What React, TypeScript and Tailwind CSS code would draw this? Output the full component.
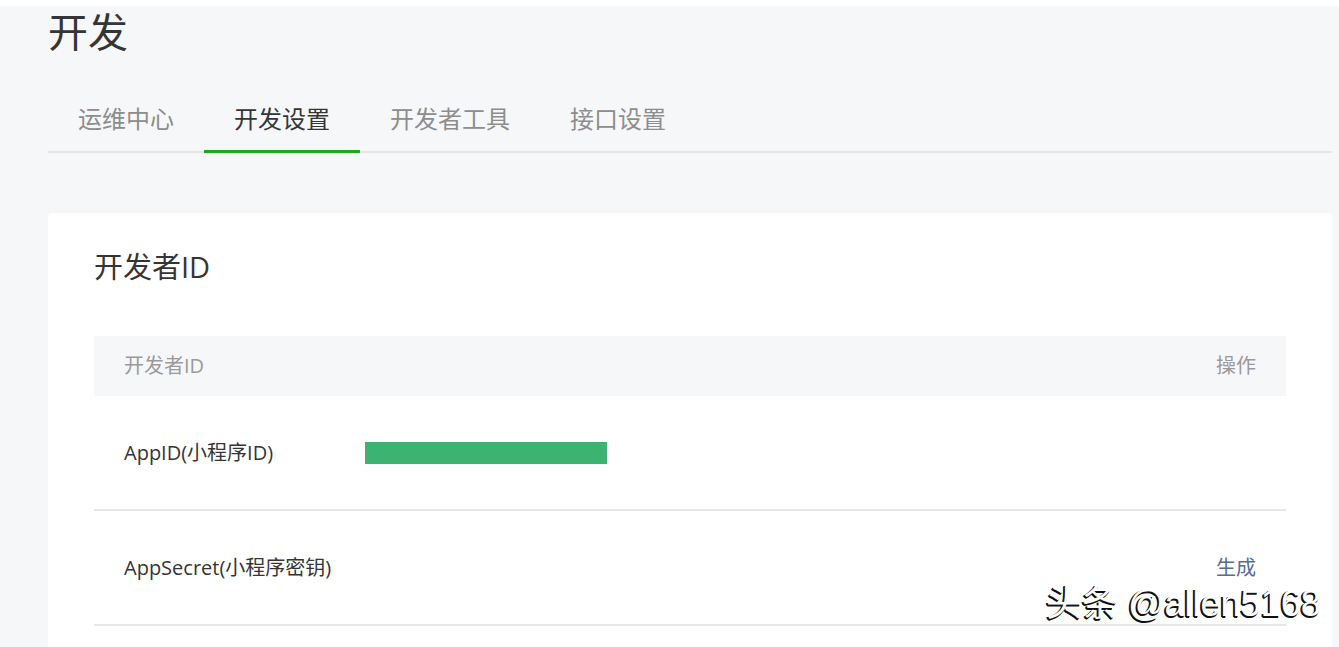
import React, { useState } from 'react';

const tabs = ['运维中心', '开发设置', '开发者工具', '接口设置'];

type Row = { label: string; value?: boolean; action?: string };

const rows: Row[] = [
  { label: 'AppID(小程序ID)', value: true },
  { label: 'AppSecret(小程序密钥)', action: '生成' },
];

export default function App() {
  const [active, setActive] = useState(1);

  return (
    <div className="relative w-[1339px] h-[647px] overflow-hidden bg-white font-[Open_Sans,Noto_Sans_CJK_SC,sans-serif]">
      <div className="mt-[6px] h-[641px] bg-[#f6f7f9] pl-[48px] pr-[7px]">
        {/* Page title */}
        <h1 className="text-[40px] leading-[52px] text-[#353535]">开发</h1>

        {/* Tabs */}
        <div className="mt-[44px] flex border-b-2 border-[#e5e6e8]">
          {tabs.map((tab, idx) => (
            <button
              key={tab}
              onClick={() => setActive(idx)}
              className={`
                -mb-[2px] px-[30px] pb-[14px] text-[24px] leading-[34px] border-b-[3px]
                ${active === idx ? 'border-[#1aad19] text-[#353535]' : 'border-transparent text-[#8d8d8d]'}
              `}
            >
              {tab}
            </button>
          ))}
        </div>

        {/* Card */}
        <div className="mt-[60px] rounded-[4px] bg-white px-[46px] pt-[34px] pb-[40px]">
          <h2 className="text-[29px] leading-[40px] text-[#353535]">开发者ID</h2>

          <div className="mt-[49px]">
            <div className="flex h-[60px] items-center justify-between bg-[#f6f7f9] px-[30px] text-[20px] text-[#9a9a9a]">
              <span>开发者ID</span>
              <span>操作</span>
            </div>

            {rows.map(row => (
              <div
                key={row.label}
                className="flex h-[115px] items-center border-b-2 border-[#e7e7e7] px-[30px] text-[20px] text-[#353535]"
              >
                <span className="w-[241px] shrink-0">{row.label}</span>
                {row.value && <div className="h-[22px] w-[242px] bg-[#3cb371]" />}
                <span className="ml-auto text-[#576b95]">{row.action}</span>
              </div>
            ))}
          </div>
        </div>
      </div>

      {/* Watermark */}
      <div className="absolute left-[1046px] top-[581px] font-[Liberation_Sans,Noto_Sans_CJK_SC,sans-serif] text-[36px] leading-[46px] text-white [text-shadow:-1px_1px_0_#111,-2px_1px_0_#111,-1px_2px_0_#111]">
        头条 @allen5168
      </div>
    </div>
  );
}
